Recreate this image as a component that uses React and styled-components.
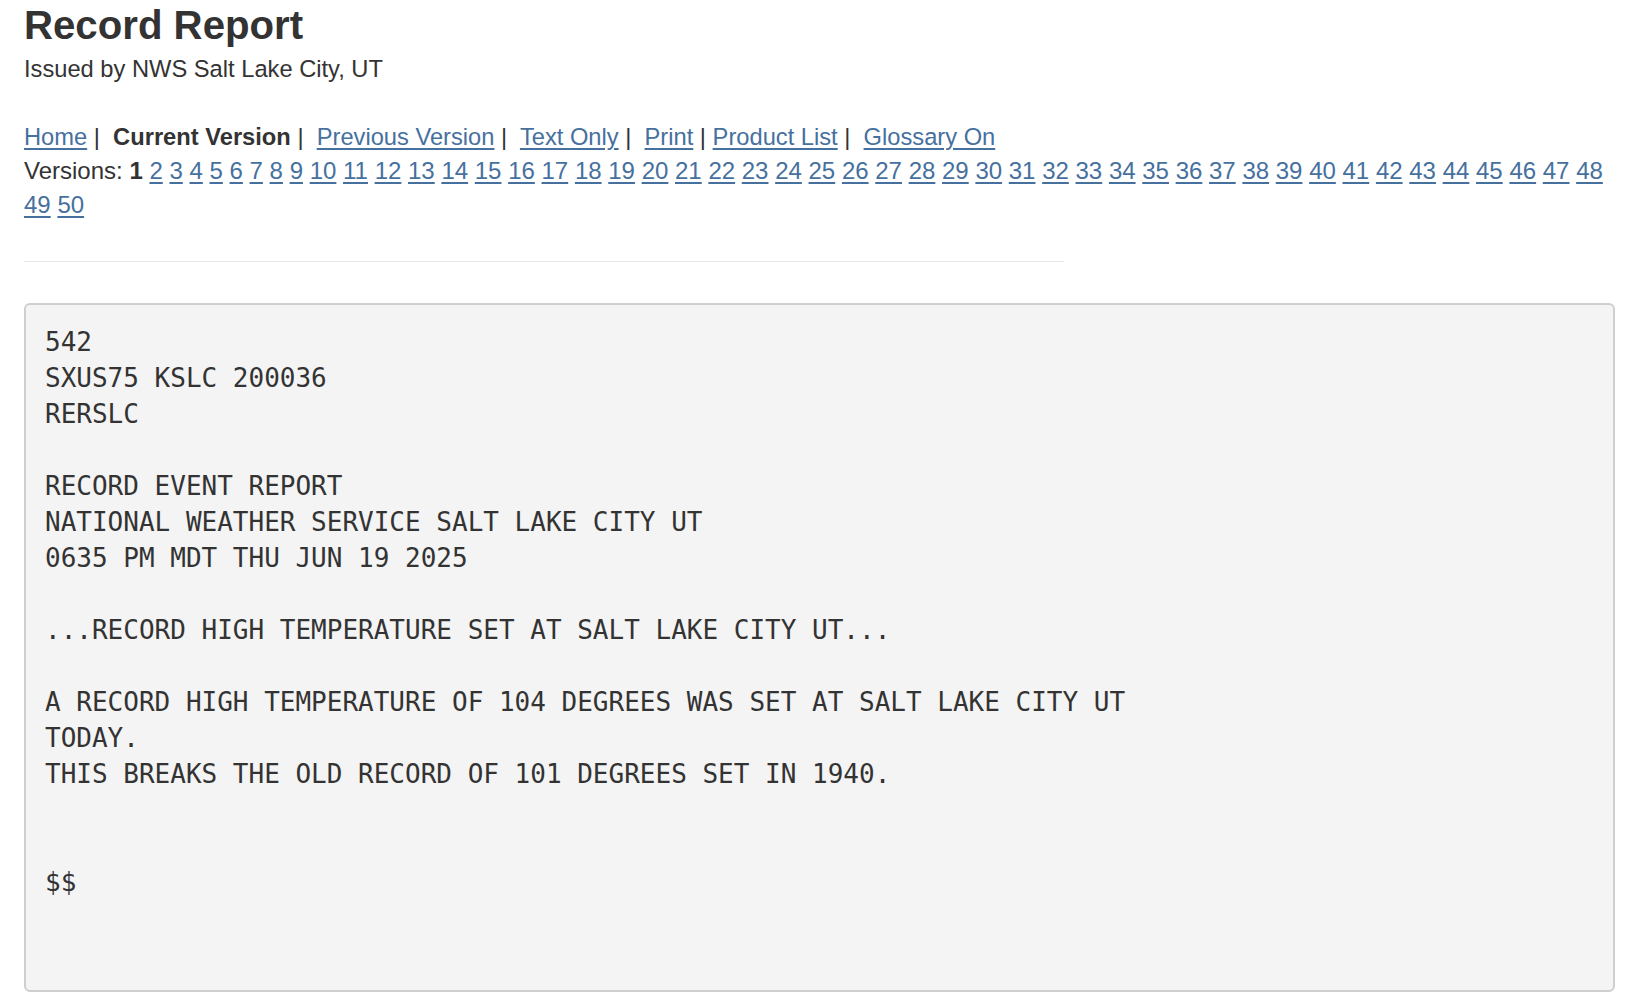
import React from "react";
import styled, { createGlobalStyle } from "styled-components";

const GlobalStyle = createGlobalStyle`
  html, body {
    margin: 0;
    padding: 0;
    background: #fff;
  }
  body {
    font-family: "Liberation Sans", Arial, Helvetica, sans-serif;
    font-size: 23.7px;
    line-height: 34px;
    color: #333;
  }
`;

const Page = styled.div`
  width: 1591px;
  padding: 4px 25px 12px 24px;
`;

const Title = styled.h1`
  margin: 0;
  font-size: 40.2px;
  line-height: 44px;
  font-weight: 700;
  color: #333;
`;

const Issuer = styled.div`
  margin-top: 4px;
`;

const NavBar = styled.div`
  margin-top: 34px;
  white-space: pre-wrap;
`;

const Link = styled.a`
  color: #46709e;
  text-decoration: underline;
  text-underline-offset: 3px;
  cursor: pointer;
`;

const Current = styled.b`
  font-weight: 700;
`;

const Versions = styled.div`
  font-size: 24px;
`;

const Rule = styled.hr`
  width: 1040px;
  margin: 39px 0 41px;
  border: 0;
  border-top: 1px solid #e6e6e6;
`;

const Product = styled.pre`
  margin: 0;
  padding: 19px 19px 18px;
  background: #f4f4f4;
  border: 2px solid #cfcfcf;
  border-radius: 6px;
  font-family: "DejaVu Sans Mono", "Liberation Mono", monospace;
  font-size: 26px;
  line-height: 36px;
  color: #333;
  white-space: pre-wrap;
`;

const navItems = [
  { label: "Home", after: " |  " },
  { label: "Current Version", current: true, after: " |  " },
  { label: "Previous Version", after: " |  " },
  { label: "Text Only", after: " |  " },
  { label: "Print", after: " | " },
  { label: "Product List", after: " |  " },
  { label: "Glossary On", after: "" },
];

const reportText = `542
SXUS75 KSLC 200036
RERSLC

RECORD EVENT REPORT
NATIONAL WEATHER SERVICE SALT LAKE CITY UT
0635 PM MDT THU JUN 19 2025

...RECORD HIGH TEMPERATURE SET AT SALT LAKE CITY UT...

A RECORD HIGH TEMPERATURE OF 104 DEGREES WAS SET AT SALT LAKE CITY UT
TODAY.
THIS BREAKS THE OLD RECORD OF 101 DEGREES SET IN 1940.


$$


`;

const versionNumbers = Array.from({ length: 49 }, (_, i) => i + 2);

export default function App() {
  return (
    <Page>
      <GlobalStyle />
      <Title>Record Report</Title>
      <Issuer>Issued by NWS Salt Lake City, UT</Issuer>
      <NavBar>
        {navItems.map((item) => (
          <React.Fragment key={item.label}>
            {item.current ? <Current>{item.label}</Current> : <Link>{item.label}</Link>}
            {item.after}
          </React.Fragment>
        ))}
      </NavBar>
      <Versions>
        Versions: <Current>1</Current>
        {versionNumbers.map((n) => (
          <React.Fragment key={n}>
            {" "}
            <Link>{n}</Link>
          </React.Fragment>
        ))}
      </Versions>
      <Rule />
      <Product>{reportText}</Product>
    </Page>
  );
}
